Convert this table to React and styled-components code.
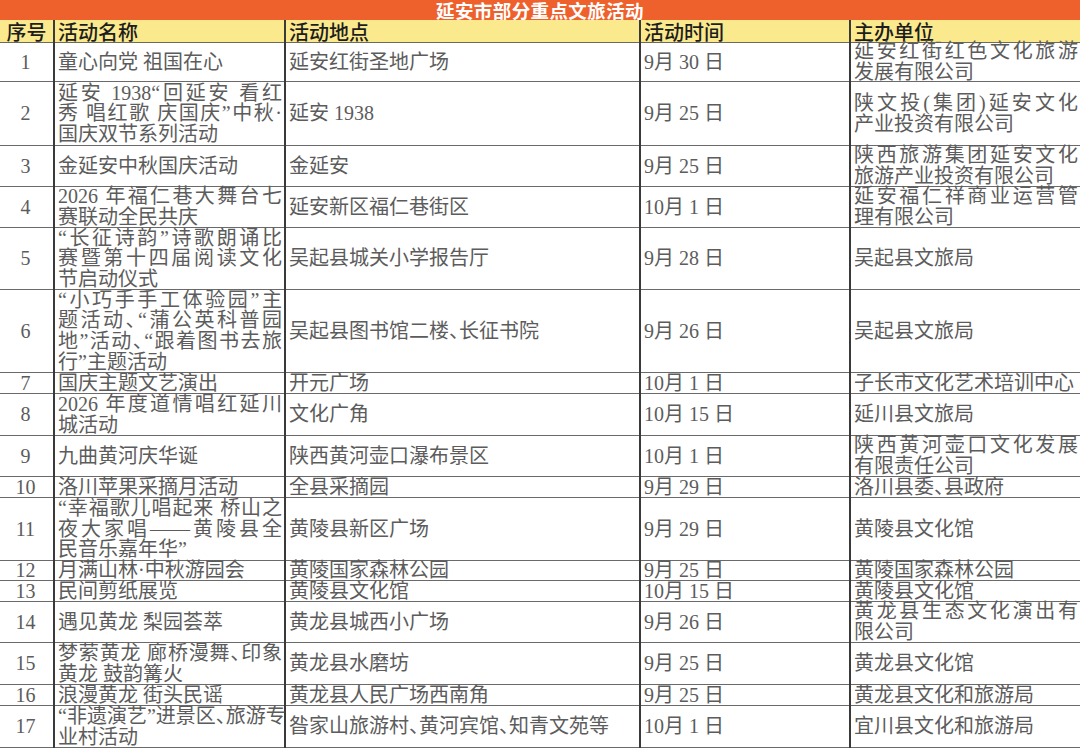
import React from "react";
import styled, { createGlobalStyle } from "styled-components";

const GlobalStyle = createGlobalStyle`
  html, body {
    margin: 0;
    padding: 0;
    background: #fff;
  }
  body {
    font-family: "Liberation Serif", "Noto Sans CJK SC", serif;
    font-feature-settings: "halt";
  }
`;

const Page = styled.div`
  width: 1080px;
  height: 749px;
  overflow: hidden;
  background: #fff;
`;

const TitleBar = styled.div`
  height: 20px;
  background: #ef612c;
  color: #fff;
  font-family: "Noto Sans CJK SC", sans-serif;
  font-weight: 700;
  font-size: 18.5px;
  line-height: 20px;
  text-align: center;
  letter-spacing: 0.4px;
`;

const Table = styled.table`
  width: 1080px;
  table-layout: fixed;
  border-collapse: collapse;
`;

const HeadCell = styled.th`
  padding: 0;
  background: #fbe98d;
  color: #1d1d1d;
  font-family: "Noto Sans CJK SC", sans-serif;
  font-weight: 500;
  font-size: 20px;
  text-align: left;
  border: 1px solid #6d6a55;
  border-left: 2px solid #3a3a3a;
  border-top: none;
  white-space: nowrap;

  &:first-child {
    border-left: none;
  }
  &:last-child {
    border-right: none;
  }
`;

const HeadBox = styled.div`
  height: 22px;
  line-height: 23px;
  padding-left: ${(p) => (p.$center ? 0 : 3)}px;
  text-align: ${(p) => (p.$center ? "center" : "left")};
`;

const Cell = styled.td`
  padding: 0;
  color: #5c5c5c;
  font-size: 20px;
  line-height: 20.6px;
  border-top: 1px solid #6a6a6a;
  border-bottom: 1px solid #6a6a6a;
  border-left: 2px solid #3a3a3a;

  &:first-child {
    border-left: none;
  }
`;

const CellBox = styled.div`
  height: ${(p) => p.$h}px;
  display: flex;
  flex-direction: column;
  justify-content: center;
  align-items: ${(p) => (p.$center ? "center" : "stretch")};
  padding: 0 2px 0 ${(p) => (p.$center ? 0 : 3)}px;
  white-space: nowrap;
`;

const Line = styled.span`
  display: block;
  white-space: nowrap;
  text-align: ${(p) => (p.$spread ? "justify" : "left")};
  text-align-last: ${(p) => (p.$spread ? "justify" : "auto")};
`;

const columns = ["序号", "活动名称", "活动地点", "活动时间", "主办单位"];
const widths = [54, 231, 355, 210, 230];

const rows = [
  { h: 39, name: ["童心向党 祖国在心"], place: "延安红街圣地广场", date: "9月 30 日", org: ["延安红街红色文化旅游", "发展有限公司"] },
  { h: 64, name: ["延安 1938“回延安 看红", "秀 唱红歌 庆国庆”中秋·", "国庆双节系列活动"], place: "延安 1938", date: "9月 25 日", org: ["陕文投(集团)延安文化", "产业投资有限公司"] },
  { h: 41, name: ["金延安中秋国庆活动"], place: "金延安", date: "9月 25 日", org: ["陕西旅游集团延安文化", "旅游产业投资有限公司"] },
  { h: 41, name: ["2026 年福仁巷大舞台七", "赛联动全民共庆"], place: "延安新区福仁巷街区", date: "10月 1 日", org: ["延安福仁祥商业运营管", "理有限公司"] },
  { h: 62, name: ["“长征诗韵”诗歌朗诵比", "赛暨第十四届阅读文化", "节启动仪式"], place: "吴起县城关小学报告厅", date: "9月 28 日", org: ["吴起县文旅局"] },
  { h: 83, name: ["“小巧手手工体验园”主", "题活动、“蒲公英科普园", "地”活动、“跟着图书去旅", "行”主题活动"], place: "吴起县图书馆二楼、长征书院", date: "9月 26 日", org: ["吴起县文旅局"] },
  { h: 21, name: ["国庆主题文艺演出"], place: "开元广场", date: "10月 1 日", org: ["子长市文化艺术培训中心"] },
  { h: 42, name: ["2026 年度道情唱红延川", "城活动"], place: "文化广角", date: "10月 15 日", org: ["延川县文旅局"] },
  { h: 41, name: ["九曲黄河庆华诞"], place: "陕西黄河壶口瀑布景区", date: "10月 1 日", org: ["陕西黄河壶口文化发展", "有限责任公司"] },
  { h: 21, name: ["洛川苹果采摘月活动"], place: "全县采摘园", date: "9月 29 日", org: ["洛川县委、县政府"] },
  { h: 63, name: ["“幸福歌儿唱起来 桥山之", "夜大家唱——黄陵县全", "民音乐嘉年华”"], place: "黄陵县新区广场", date: "9月 29 日", org: ["黄陵县文化馆"] },
  { h: 20, name: ["月满山林·中秋游园会"], place: "黄陵国家森林公园", date: "9月 25 日", org: ["黄陵国家森林公园"] },
  { h: 21, name: ["民间剪纸展览"], place: "黄陵县文化馆", date: "10月 15 日", org: ["黄陵县文化馆"] },
  { h: 41, name: ["遇见黄龙 梨园荟萃"], place: "黄龙县城西小广场", date: "9月 26 日", org: ["黄龙县生态文化演出有", "限公司"] },
  { h: 42, name: ["梦萦黄龙 廊桥漫舞、印象", "黄龙 鼓韵篝火"], place: "黄龙县水磨坊", date: "9月 25 日", org: ["黄龙县文化馆"] },
  { h: 21, name: ["浪漫黄龙 街头民谣"], place: "黄龙县人民广场西南角", date: "9月 25 日", org: ["黄龙县文化和旅游局"] },
  { h: 42, name: ["“非遗演艺”进景区、旅游专", "业村活动"], place: "昝家山旅游村、黄河宾馆、知青文苑等", date: "10月 1 日", org: ["宜川县文化和旅游局"] },
];

const Lines = ({ lines }) =>
  lines.map((text, i) => (
    <Line key={i} $spread={lines.length > 1 && i < lines.length - 1}>
      {text}
    </Line>
  ));

export default function App() {
  return (
    <Page>
      <GlobalStyle />
      <TitleBar>延安市部分重点文旅活动</TitleBar>
      <Table>
        <colgroup>
          {widths.map((w, i) => (
            <col key={i} style={{ width: w }} />
          ))}
        </colgroup>
        <thead>
          <tr>
            {columns.map((c, i) => (
              <HeadCell key={c}>
                <HeadBox $center={i === 0}>{c}</HeadBox>
              </HeadCell>
            ))}
          </tr>
        </thead>
        <tbody>
          {rows.map((r, i) => (
            <tr key={i}>
              <Cell>
                <CellBox $h={r.h - 1} $center>
                  {i + 1}
                </CellBox>
              </Cell>
              <Cell>
                <CellBox $h={r.h - 1}>
                  <Lines lines={r.name} />
                </CellBox>
              </Cell>
              <Cell>
                <CellBox $h={r.h - 1}>{r.place}</CellBox>
              </Cell>
              <Cell>
                <CellBox $h={r.h - 1}>{r.date}</CellBox>
              </Cell>
              <Cell>
                <CellBox $h={r.h - 1}>
                  <Lines lines={r.org} />
                </CellBox>
              </Cell>
            </tr>
          ))}
        </tbody>
      </Table>
    </Page>
  );
}
